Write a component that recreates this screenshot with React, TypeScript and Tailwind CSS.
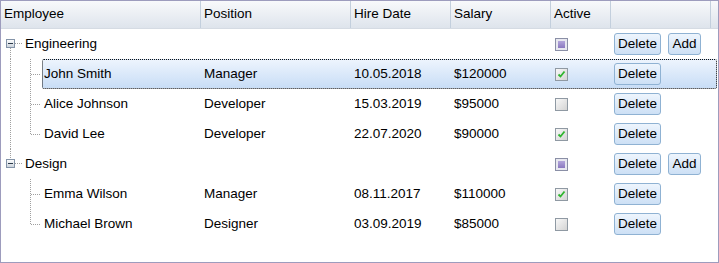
import React from "react";

type Emp = { name: string; pos: string; date: string; salary: string; active: boolean; selected?: boolean };
type Group = { name: string; items: Emp[] };

const groups: Group[] = [
  {
    name: "Engineering",
    items: [
      { name: "John Smith", pos: "Manager", date: "10.05.2018", salary: "$120000", active: true, selected: true },
      { name: "Alice Johnson", pos: "Developer", date: "15.03.2019", salary: "$95000", active: false },
      { name: "David Lee", pos: "Developer", date: "22.07.2020", salary: "$90000", active: true },
    ],
  },
  {
    name: "Design",
    items: [
      { name: "Emma Wilson", pos: "Manager", date: "08.11.2017", salary: "$110000", active: true },
      { name: "Michael Brown", pos: "Designer", date: "03.09.2019", salary: "$85000", active: false },
    ],
  },
];

const DOT = "#a0a0a0";

function Btn({ label, w }: { label: string; w: string }) {
  return (
    <div
      className={`${w} h-[22px] flex items-center justify-center rounded-[3px] border border-[#8fb2d3] bg-gradient-to-b from-[#eef5fd] to-[#cde0f5] text-[13.5px] text-black leading-none`}
    >
      {label}
    </div>
  );
}

function Check({ state }: { state: "on" | "off" | "mixed" }) {
  if (state === "mixed") {
    return (
      <div className="w-[13px] h-[13px] border border-[#8a8fa6] bg-[#e8e8f0] p-[2px]">
        <div className="w-full h-full bg-gradient-to-b from-[#b3a5db] to-[#8a78c0]" />
      </div>
    );
  }
  return (
    <div className="w-[13px] h-[13px] border border-[#8f99a3] bg-gradient-to-br from-[#f8f8f8] to-[#d4d4d4] flex items-center justify-center">
      {state === "on" && (
        <svg width="9" height="9" viewBox="0 0 9 9">
          <path d="M1.5 4.5 L3.5 6.5 L7.5 1.5" stroke="#2fb52f" strokeWidth="1.8" fill="none" />
        </svg>
      )}
    </div>
  );
}

function Cells({ emp, group }: { emp?: Emp; group?: boolean }) {
  return (
    <>
      <div className="w-[150px] pl-[3px] flex items-center">{emp?.pos}</div>
      <div className="w-[100px] pl-[3px] flex items-center">{emp?.date}</div>
      <div className="w-[100px] pl-[3px] flex items-center">{emp?.salary}</div>
      <div className="w-[60px] pl-[4px] flex items-center">
        <Check state={group ? "mixed" : emp?.active ? "on" : "off"} />
      </div>
      <div className="flex-1 pl-[3px] flex items-center gap-[7px]">
        <Btn label="Delete" w="w-[47px]" />
        {group && <Btn label="Add" w="w-[33px]" />}
      </div>
    </>
  );
}

function GroupRow({ g, last }: { g: Group; last: boolean }) {
  return (
    <div className="h-[30px] flex">
      <div className="w-[200px] flex items-center">
        <svg width="23" height="30" viewBox="0 0 23 30" shapeRendering="crispEdges" className="shrink-0">
          {last ? (
            <line x1="9.5" y1="0" x2="9.5" y2="10" stroke={DOT} strokeDasharray="1 1" />
          ) : (
            <line x1="9.5" y1="19" x2="9.5" y2="30" stroke={DOT} strokeDasharray="1 1" />
          )}
          <line x1="14" y1="14.5" x2="22" y2="14.5" stroke={DOT} strokeDasharray="1 1" />
          <rect x="5.5" y="10.5" width="8" height="8" fill="url(#gb)" stroke="#8494a8" />
          <line x1="7" y1="14.5" x2="12" y2="14.5" stroke="#2a3a4a" />
          <defs>
            <linearGradient id="gb" x1="0" y1="0" x2="0" y2="1">
              <stop offset="0" stopColor="#ffffff" />
              <stop offset="1" stopColor="#c8d0da" />
            </linearGradient>
          </defs>
        </svg>
        <span className="pl-[1px]">{g.name}</span>
      </div>
      <Cells group />
    </div>
  );
}

function ChildRow({ e, first, last, outerCont }: { e: Emp; first: boolean; last: boolean; outerCont: boolean }) {
  return (
    <div className="h-[30px] flex">
      <svg width="41" height="30" viewBox="0 0 41 30" shapeRendering="crispEdges" className="shrink-0">
        {outerCont && <line x1="9.5" y1={first ? 0 : 1} x2="9.5" y2="30" stroke={DOT} strokeDasharray="1 1" />}
        <line x1="29.5" y1="0" x2="29.5" y2={last ? 15 : 30} stroke={DOT} strokeDasharray="1 1" />
        <line x1="30" y1="15.5" x2="40" y2="15.5" stroke={DOT} strokeDasharray="1 1" />
      </svg>
      <div
        className={`flex-1 mr-[1px] flex border rounded-[2px] ${
          e.selected
            ? "border-dotted border-[#111] bg-gradient-to-b from-[#edf4fd] to-[#c8ddf6]"
            : "border-transparent"
        }`}
      >
        <div className="w-[158px] pl-[1px] flex items-center">{e.name}</div>
        <Cells emp={e} />
      </div>
    </div>
  );
}

export default function App() {
  const heads = [
    { t: "Employee", w: "w-[200px]" },
    { t: "Position", w: "w-[150px]" },
    { t: "Hire Date", w: "w-[100px]" },
    { t: "Salary", w: "w-[100px]" },
    { t: "Active", w: "w-[60px]" },
    { t: "", w: "w-[100px]" },
  ];
  return (
    <div
      className="w-[719px] h-[263px] border border-[#9d9cbd] bg-white text-[13.5px] text-black overflow-hidden"
      style={{ fontFamily: '"Liberation Sans", Arial, sans-serif' }}
    >
      <div className="h-[28px] flex border-b border-[#d5dbe3] bg-gradient-to-b from-[#f8f9fb] to-[#dee4ec]">
        {heads.map((h, i) => (
          <div key={i} className={`${h.w} pl-[3px] flex items-center border-r border-[#c3cfdd]`}>
            {h.t}
          </div>
        ))}
        <div className="flex-1" />
      </div>
      {groups.map((g, gi) => {
        const lastGroup = gi === groups.length - 1;
        return (
          <React.Fragment key={g.name}>
            <GroupRow g={g} last={lastGroup} />
            {g.items.map((e, i) => (
              <ChildRow
                key={e.name}
                e={e}
                first={i === 0}
                last={i === g.items.length - 1}
                outerCont={!lastGroup}
              />
            ))}
          </React.Fragment>
        );
      })}
    </div>
  );
}
